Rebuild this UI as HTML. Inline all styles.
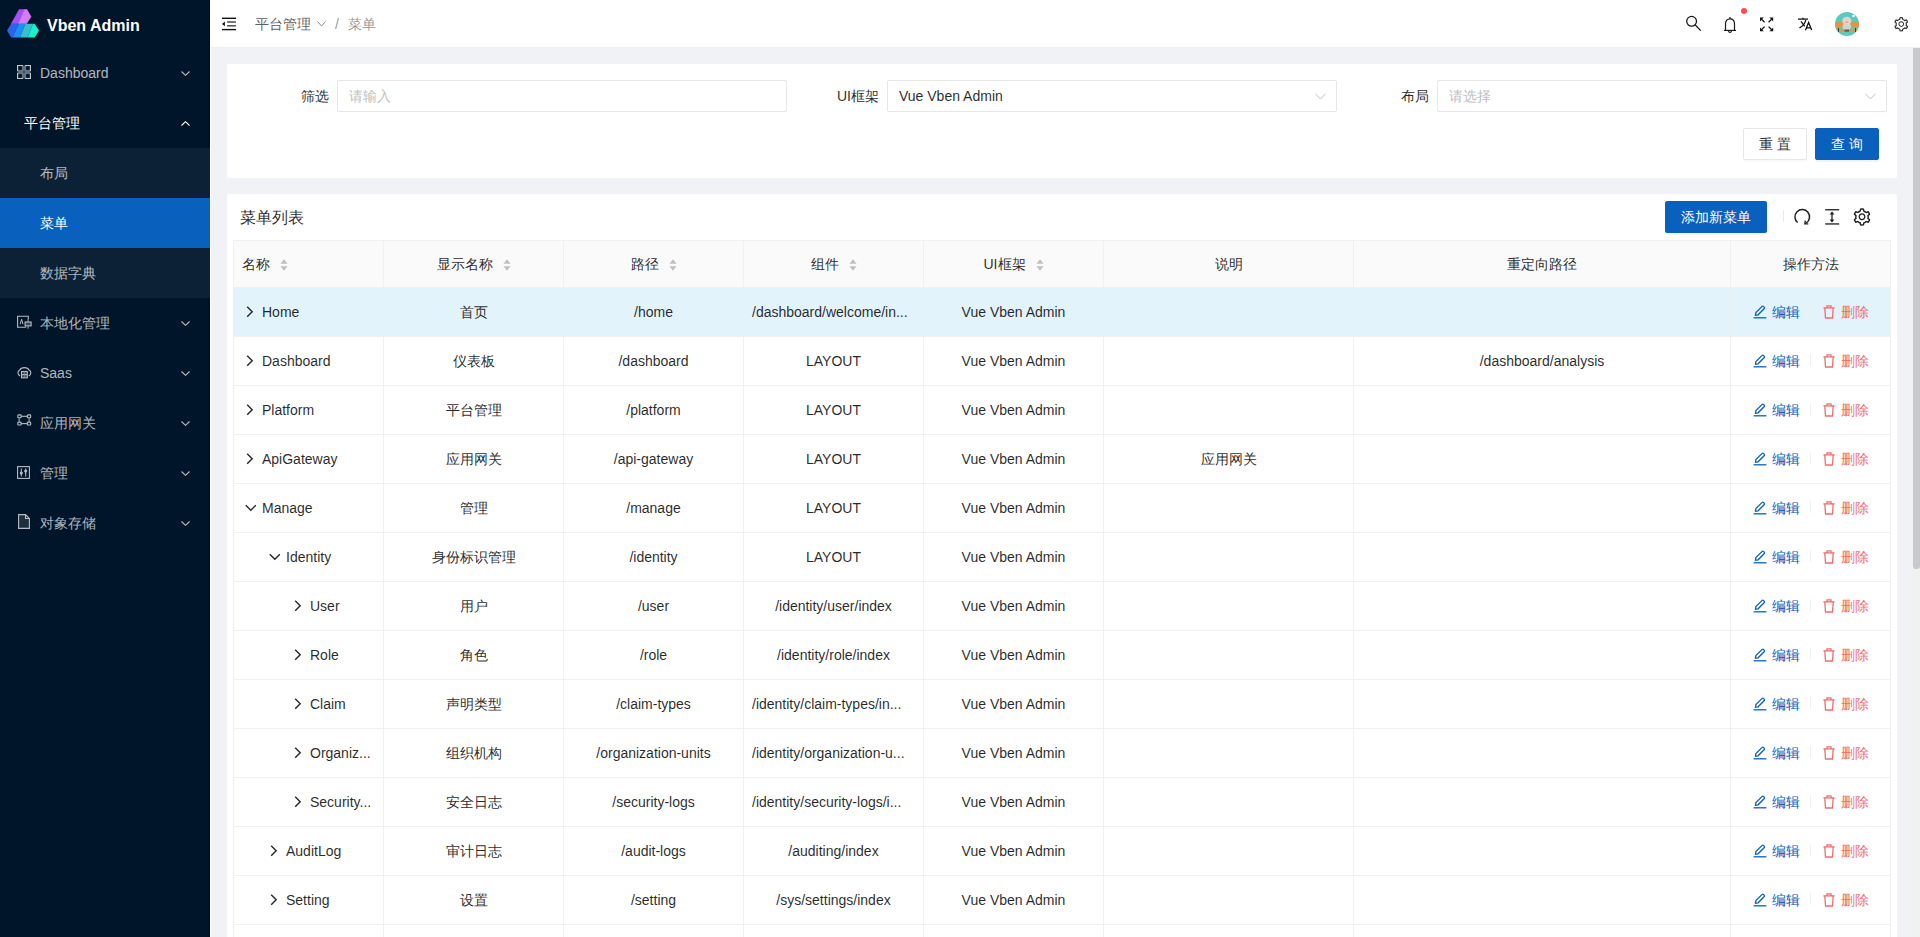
<!DOCTYPE html>
<html><head><meta charset="utf-8">
<style>
*{box-sizing:border-box;margin:0;padding:0}
html,body{width:1920px;height:937px;overflow:hidden;background:#f0f2f5;font-family:"Liberation Sans",sans-serif;font-size:14px;color:rgba(0,0,0,.85)}
.abs{position:absolute}
svg{display:block}
/* sidebar */
#side{position:absolute;left:0;top:0;width:210px;height:937px;background:linear-gradient(to right,#001529 209px,#000c17 209px)}
#side .edge{position:absolute;right:0;top:0;width:1px;height:937px;background:#000c17}
.logo-t{position:absolute;left:47px;top:14.5px;font-size:16px;font-weight:bold;color:#fff;line-height:22px;white-space:nowrap}
.mi{position:absolute;left:0;width:210px;height:50px;line-height:50px;color:rgba(255,255,255,.7);white-space:nowrap}
.mi .t{position:absolute;left:40px;top:0}
.mi .ic{position:absolute;left:17px;top:18px}
.mi .ch{position:absolute;left:181px;top:22px}
.sub{background:#0c2135}
.act{background:#0960bd;color:#fff}
/* header */
#hdr{position:absolute;left:210px;top:0;width:1710px;height:48px;background:#fff;border-bottom:1px solid #ececec;border-left:1px solid #fff}
#wline{position:absolute;left:210px;top:0;width:1px;height:937px;background:#fff}
/* scrollbar */
#sb{position:absolute;left:1913px;top:48px;width:7px;height:889px;background:#f1f1f1}
#sbt{position:absolute;left:1913px;top:48px;width:7px;height:521px;background:#c8c9cc;border-radius:0 0 3px 3px}
/* cards */
.card{position:absolute;background:#fff;border-radius:2px}
.lbl{position:absolute;width:100px;text-align:right;line-height:32px;padding-right:8px}
.inp{position:absolute;height:32px;width:450px;border:1px solid #e6e6e6;border-radius:2px;background:#fff;line-height:30px;padding-left:11px}
.ph{color:#bfbfbf}
.btn{position:absolute;height:32px;border-radius:2px;line-height:30px;text-align:center;border:1px solid #e6e6e6;background:#fff;box-shadow:0 2px 0 rgba(0,0,0,.015)}
.btn.p{background:#0960bd;border-color:#0960bd;color:#fff;box-shadow:0 2px 0 rgba(0,0,0,.045)}
</style></head><body>
<div id="side">
  <svg class="abs" style="left:7px;top:9px" width="33" height="30" viewBox="0 0 33 30">
    <polygon points="12.2,0.6 17.6,0.6 11.6,14.75 4.25,14.75" fill="#a650f7" stroke="#a650f7" stroke-width="0.6" stroke-linejoin="round"/>
    <polygon points="17.6,0.6 20,0.6 24,7.7 19.5,14.75 11.6,14.75" fill="#d77cf9" stroke="#d77cf9" stroke-width="0.6" stroke-linejoin="round"/>
    <polygon points="0,21.4 4.25,14.75 11.75,14.75 5.5,28.5 4.25,28.5" fill="#2b63ef"/>
    <polygon points="11.75,14.75 18.4,14.75 13,28.5 5.5,28.5" fill="#1e8ff9"/>
    <polygon points="18.4,14.75 26,14.75 20.5,28.5 13,28.5" fill="#35c0cb"/>
    <polygon points="26,14.75 27.5,14.75 32,21.4 27.6,28.5 20.5,28.5" fill="#14f2cc"/>
  </svg>
  <div class="logo-t">Vben Admin</div>
  <div class="mi" style="top:48px">
    <svg class="ic" style="top:17px" width="14" height="14" viewBox="0 0 14 14"><rect x="0" y="0" width="14" height="14" fill="#66717e"/><rect x="1.2" y="1.2" width="3.7" height="3.7" fill="#001529"/><rect x="9.1" y="1.2" width="3.7" height="3.7" fill="#001529"/><rect x="1.2" y="9.1" width="3.7" height="3.7" fill="#001529"/><rect x="9.1" y="9.1" width="3.7" height="3.7" fill="#001529"/><rect x="6.3" y="6.3" width="1.4" height="1.4" fill="#001529"/><rect x="6.2" y="0" width="1.6" height="1" fill="#1f2d3b"/><rect x="6.2" y="13" width="1.6" height="1" fill="#1f2d3b"/><rect x="0" y="6.2" width="1" height="1.6" fill="#1f2d3b"/><rect x="13" y="6.2" width="1" height="1.6" fill="#1f2d3b"/><path d="M0.55,6 L0.55,0.55 L6,0.55 M8,0.55 L13.45,0.55 L13.45,6 M13.45,8 L13.45,13.45 L8,13.45 M6,13.45 L0.55,13.45 L0.55,8" fill="none" stroke="#c3c7cd" stroke-width="1.1"/></svg>
    <span class="t">Dashboard</span>
    <svg class="ch" style="top:23px" width="9" height="5" viewBox="0 0 9 5" fill="none" stroke="#b9bcc1" stroke-width="1.1"><polyline points="0.5,0.5 4.5,4.3 8.5,0.5"/></svg>
  </div>
  <div class="mi" style="top:98px;color:#fff">
    <span class="t" style="left:24px">平台管理</span>
    <svg class="ch" style="top:23px" width="9" height="5" viewBox="0 0 9 5" fill="none" stroke="#fff" stroke-width="1.1"><polyline points="0.5,4.5 4.5,0.7 8.5,4.5"/></svg>
  </div>
  <div class="mi sub" style="top:148px"><span class="t">布局</span></div>
  <div class="mi act" style="top:198px;width:210px"><span class="t">菜单</span></div>
  <div class="mi sub" style="top:248px"><span class="t">数据字典</span></div>
  <div class="mi" style="top:298px">
    <svg class="ic" style="top:17px" width="15" height="14" viewBox="0 0 15 14" fill="none" stroke="#b9bcc1" stroke-width="1.1"><polyline points="9.2,12.2 0.6,12.2 0.6,1.2 11.3,1.2 11.3,4"/><path d="M3.2,9.2 L4.6,4.2 L6,9.2" stroke-width="1"/><line x1="11.1" y1="4" x2="11.1" y2="13.8" stroke="#7d8690" stroke-width="1.3"/><rect x="8.1" y="7" width="6" height="3.9" fill="#3a4654" stroke="#b9bcc1"/></svg>
    <span class="t">本地化管理</span>
    <svg class="ch" style="top:23px" width="9" height="5" viewBox="0 0 9 5" fill="none" stroke="#b9bcc1" stroke-width="1.1"><polyline points="0.5,0.5 4.5,4.3 8.5,0.5"/></svg>
  </div>
  <div class="mi" style="top:348px">
    <svg class="ic" style="top:18px" width="15" height="13" viewBox="0 0 15 13" fill="none" stroke="#b9bcc1" stroke-width="1.1"><path d="M3,10 C0.3,8.5 0.3,5 2.8,4 C4,0.8 10.8,0.8 12,4 C14.5,5 14.5,8.5 11.8,10"/><rect x="4.5" y="5.5" width="5.8" height="6.3" fill="#3a4654"/><line x1="4.5" y1="8.65" x2="10.3" y2="8.65"/><line x1="7.4" y1="5.5" x2="7.4" y2="11.8" stroke-width="0.8" stroke="#8a929b"/></svg>
    <span class="t">Saas</span>
    <svg class="ch" style="top:23px" width="9" height="5" viewBox="0 0 9 5" fill="none" stroke="#b9bcc1" stroke-width="1.1"><polyline points="0.5,0.5 4.5,4.3 8.5,0.5"/></svg>
  </div>
  <div class="mi" style="top:398px">
    <svg class="ic" style="top:16px" width="15" height="12" viewBox="0 0 15 12" fill="none" stroke="#b9bcc1" stroke-width="1.1"><rect x="0.85" y="0.85" width="3.3" height="2.9" rx="0.6"/><rect x="10.35" y="0.85" width="3.3" height="2.9" rx="0.6"/><rect x="0.85" y="8.15" width="3.3" height="2.9" rx="0.6"/><rect x="10.35" y="8.15" width="3.3" height="2.9" rx="0.6"/><line x1="4.1" y1="2.3" x2="10.4" y2="2.3"/><line x1="4.1" y1="9.6" x2="10.4" y2="9.6"/><line x1="2.2" y1="3.7" x2="2.2" y2="8.2" stroke="#8a929b" stroke-width="1.3"/><line x1="12.2" y1="3.7" x2="12.2" y2="8.2" stroke="#8a929b" stroke-width="1.3"/></svg>
    <span class="t">应用网关</span>
    <svg class="ch" style="top:23px" width="9" height="5" viewBox="0 0 9 5" fill="none" stroke="#b9bcc1" stroke-width="1.1"><polyline points="0.5,0.5 4.5,4.3 8.5,0.5"/></svg>
  </div>
  <div class="mi" style="top:448px">
    <svg class="ic" style="top:18px;left:17px" width="13" height="13" viewBox="0 0 13 13" fill="none" stroke="#b9bcc1" stroke-width="1.1"><rect x="0.6" y="0.6" width="11.8" height="11.8"/><line x1="4.3" y1="2.5" x2="4.3" y2="10.5"/><line x1="8.7" y1="2.5" x2="8.7" y2="10.5"/><circle cx="4.3" cy="7" r="1" fill="#b9bcc1"/><circle cx="8.7" cy="5" r="1" fill="#b9bcc1"/></svg>
    <span class="t">管理</span>
    <svg class="ch" style="top:23px" width="9" height="5" viewBox="0 0 9 5" fill="none" stroke="#b9bcc1" stroke-width="1.1"><polyline points="0.5,0.5 4.5,4.3 8.5,0.5"/></svg>
  </div>
  <div class="mi" style="top:498px">
    <svg class="ic" style="top:16px;left:18px" width="12" height="15" viewBox="0 0 12 15" fill="none" stroke="#b9bcc1" stroke-width="1.1"><path d="M0.6,0.6 L7.5,0.6 L11.4,4.5 L11.4,14.4 L0.6,14.4 Z" fill="#1f2f40"/><path d="M7.5,0.6 L7.5,4.5 L11.4,4.5"/></svg>
    <span class="t">对象存储</span>
    <svg class="ch" style="top:23px" width="9" height="5" viewBox="0 0 9 5" fill="none" stroke="#b9bcc1" stroke-width="1.1"><polyline points="0.5,0.5 4.5,4.3 8.5,0.5"/></svg>
  </div>
</div>
<div id="hdr">
  <svg class="abs" style="left:10px;top:17px" width="16" height="14" viewBox="0 0 16 14"><rect x="1" y="0.6" width="14" height="1.4" fill="#111"/><rect x="6.1" y="4.3" width="8.8" height="1.4" fill="#3d3d3d"/><rect x="6.1" y="8.1" width="8.8" height="1.4" fill="#3d3d3d"/><rect x="1" y="11.9" width="14" height="1.4" fill="#111"/><polygon points="1,6.9 3.9,4.5 3.9,9.2" fill="#111"/></svg>
  <span class="abs" style="left:44px;top:13px;line-height:22px;color:rgba(0,0,0,.65)">平台管理</span>
  <svg class="abs" style="left:106px;top:21px" width="9" height="6" viewBox="0 0 9 6" fill="none" stroke="#8c8c8c" stroke-width="1"><polyline points="0.5,0.5 4.5,5 8.5,0.5"/></svg>
  <span class="abs" style="left:124px;top:13px;line-height:22px;color:rgba(0,0,0,.45)">/</span>
  <span class="abs" style="left:137px;top:13px;line-height:22px;color:rgba(0,0,0,.45)">菜单</span>
  <svg class="abs" style="left:1475px;top:15px" width="17" height="17" viewBox="0 0 17 17" fill="none" stroke="#1a1a1a" stroke-width="1.3"><circle cx="5.6" cy="6.3" r="4.9"/><line x1="9.1" y1="9.8" x2="14.7" y2="15.6"/></svg>
  <svg class="abs" style="left:1513px;top:16px" width="13" height="18" viewBox="0 0 13 18" fill="none" stroke="#1a1a1a" stroke-width="1.2"><path d="M1.5,14.3 L1.5,8 C1.5,4.8 3.4,2.8 6,2.8 C8.6,2.8 10.5,4.8 10.5,8 L10.5,14.3"/><line x1="0" y1="14.4" x2="12" y2="14.4"/><path d="M4.5,15 C4.8,16.8 7.2,16.8 7.5,15"/><line x1="6" y1="1.1" x2="6" y2="2.8"/></svg>
  <div class="abs" style="left:1530px;top:8px;width:6px;height:6px;border-radius:3px;background:#ff4d4f"></div>
  <svg class="abs" style="left:1549px;top:16.5px" width="14" height="15" viewBox="0 0 14 15" fill="#111" stroke="#111" stroke-width="1.3"><polygon points="0,0.6 3.8,0.6 0,4.4" stroke="none"/><polygon points="13.2,0.6 9.4,0.6 13.2,4.4" stroke="none"/><polygon points="0,14.2 3.8,14.2 0,10.4" stroke="none"/><polygon points="13.2,14.2 9.4,14.2 13.2,10.4" stroke="none"/><line x1="1.5" y1="2.1" x2="4.6" y2="5.2"/><line x1="11.7" y1="2.1" x2="8.6" y2="5.2"/><line x1="1.5" y1="12.7" x2="4.6" y2="9.6"/><line x1="11.7" y1="12.7" x2="8.6" y2="9.6"/></svg>
  <svg class="abs" style="left:1586px;top:16px" width="16" height="16" viewBox="0 0 16 16" fill="none" stroke="#111" stroke-width="1.3"><line x1="1" y1="3.1" x2="11" y2="3.1"/><line x1="6" y1="1.8" x2="6" y2="3.1"/><line x1="4" y1="5.3" x2="7.7" y2="10.4"/><path d="M8.7,4 Q7.8,9 2.5,11.9"/><path d="M8.5,14.3 L11.6,6.4 L14.7,14.1 M9.6,11.9 L13.6,11.9"/></svg>
  <svg class="abs" style="left:1624px;top:12px" width="24" height="24" viewBox="0 0 24 24">
    <defs><clipPath id="av"><circle cx="12" cy="12" r="12"/></clipPath></defs>
    <g clip-path="url(#av)">
      <rect width="24" height="24" fill="#5ccab9"/>
      <rect x="0" y="10" width="24" height="6" fill="#d89a48"/>
      <rect x="1" y="17.8" width="22" height="1.3" fill="#d89a48"/>
      <rect x="3" y="16" width="1" height="4" fill="#3a3a3a"/><rect x="20" y="16" width="1" height="4" fill="#3a3a3a"/>
      <ellipse cx="11.8" cy="14.5" rx="4.3" ry="3.6" fill="#d2d2d2"/>
      <ellipse cx="11.8" cy="8.8" rx="4.6" ry="4" fill="#eccfc8"/>
      <ellipse cx="11.8" cy="10" rx="1.5" ry="1" fill="#e7a4a4"/>
      <rect x="9.5" y="17.5" width="4.6" height="2.2" fill="#6e5c4c"/>
      <circle cx="18.5" cy="4" r="1.3" fill="#f4f4f4"/>
    </g>
  </svg>
  <svg class="abs" style="left:1681.6px;top:16px" width="16.5" height="16.5" viewBox="0 0 1024 1024" fill="#333"><path d="M924.8 625.7l-65.5-56c3.1-19 4.7-38.4 4.7-57.8s-1.6-38.8-4.7-57.8l65.5-56a32.03 32.03 0 009.3-35.2l-.9-2.6a443.74 443.74 0 00-79.7-137.9l-1.8-2.1a32.12 32.12 0 00-35.1-9.5l-81.3 28.9c-30-24.6-63.5-44-99.7-57.6l-15.7-85a32.05 32.05 0 00-25.8-25.7l-2.7-.5c-52.1-9.4-106.9-9.4-159 0l-2.7.5a32.05 32.05 0 00-25.8 25.7l-15.8 85.4a351.86 351.86 0 00-99 57.4l-81.9-29.1a32 32 0 00-35.1 9.5l-1.8 2.1a446.02 446.02 0 00-79.7 137.9l-.9 2.6c-4.5 12.5-.8 26.5 9.3 35.2l66.3 56.6c-3.1 18.8-4.6 38-4.6 57.1 0 19.2 1.5 38.4 4.6 57.1L99 625.5a32.03 32.03 0 00-9.3 35.2l.9 2.6c18.1 50.4 44.9 96.9 79.7 137.9l1.8 2.1a32.12 32.12 0 0035.1 9.5l81.9-29.1c29.8 24.5 63.1 43.9 99 57.4l15.8 85.4a32.05 32.05 0 0025.8 25.7l2.7.5a449.4 449.4 0 00159 0l2.7-.5a32.05 32.05 0 0025.8-25.7l15.7-85a350 350 0 0099.7-57.6l81.3 28.9a32 32 0 0035.1-9.5l1.8-2.1c34.8-41.1 61.6-87.5 79.7-137.9l.9-2.6c4.5-12.3.8-26.3-9.3-35zM788.3 465.9c2.5 15.1 3.8 30.6 3.8 46.1s-1.3 31-3.8 46.1l-6.6 40.1 74.7 63.9a370.03 370.03 0 01-42.6 73.6L721 702.8l-31.4 25.8c-23.9 19.6-50.5 35-79.3 45.8l-38.1 14.3-17.9 97a377.5 377.5 0 01-85 0l-17.9-97.2-37.8-14.5c-28.5-10.8-55-26.2-78.7-45.7l-31.4-25.9-93.4 33.2c-17-22.9-31.2-47.6-42.6-73.6l75.5-64.5-6.5-40c-2.4-14.9-3.7-30.3-3.7-45.5 0-15.3 1.2-30.6 3.7-45.5l6.5-40-75.5-64.5c11.3-26.1 25.6-50.7 42.6-73.6l93.4 33.2 31.4-25.9c23.7-19.5 50.2-34.9 78.7-45.7l37.9-14.3 17.9-97.2c28.1-3.2 56.8-3.2 85 0l17.9 97 38.1 14.3c28.7 10.8 55.4 26.2 79.3 45.8l31.4 25.8 92.8-32.9c17 22.9 31.2 47.6 42.6 73.6L781.8 426l6.5 39.9zM512 326c-97.2 0-176 78.8-176 176s78.8 176 176 176 176-78.8 176-176-78.8-176-176-176zm79.2 255.2A111.6 111.6 0 01512 614c-29.9 0-58-11.7-79.2-32.8A111.6 111.6 0 01400 502c0-29.9 11.7-58 32.8-79.2C454 401.6 482.1 390 512 390c29.9 0 58 11.6 79.2 32.8A111.6 111.6 0 01624 502c0 29.9-11.7 58-32.8 79.2z"/></svg>
</div>
<div id="wline"></div>
<div id="sb"></div><div id="sbt"></div>
<div class="card" style="left:227px;top:64px;width:1670px;height:114px">
  <div class="lbl" style="left:10px;top:16px">筛选</div>
  <div class="inp" style="left:110px;top:16px"><span class="ph">请输入</span></div>
  <div class="lbl" style="left:560px;top:16px">UI框架</div>
  <div class="inp" style="left:660px;top:16px">Vue Vben Admin<svg class="abs" style="left:427px;top:12px" width="11" height="7" viewBox="0 0 11 7" fill="none" stroke="#bfbfbf" stroke-width="1"><polyline points="0.5,0.8 5.5,6 10.5,0.8"/></svg></div>
  <div class="lbl" style="left:1110px;top:16px">布局</div>
  <div class="inp" style="left:1210px;top:16px"><span class="ph">请选择</span><svg class="abs" style="left:427px;top:12px" width="11" height="7" viewBox="0 0 11 7" fill="none" stroke="#bfbfbf" stroke-width="1"><polyline points="0.5,0.8 5.5,6 10.5,0.8"/></svg></div>
  <div class="btn" style="left:1516px;top:64px;width:64px;letter-spacing:4px;text-indent:4px">重置</div>
  <div class="btn p" style="left:1588px;top:64px;width:64px;letter-spacing:4px;text-indent:4px">查询</div>
</div>
<!--T--><div class="card" style="left:227px;top:194px;width:1670px;height:760px">
<div class="abs" style="left:13px;top:12px;font-size:16px;line-height:24px;color:rgba(0,0,0,.85)">菜单列表</div>
<div class="btn p" style="left:1438px;top:7px;width:102px">添加新菜单</div>
<div class="abs" style="left:1556px;top:16px;width:1px;height:12px;background:#eaeaea"></div>
<svg class="abs" style="left:1566px;top:14px" width="18" height="18" viewBox="0 0 18 18" fill="none" stroke="#1f1f1f" stroke-width="1.5"><path d="M4.6,14.5 A7.3,7.3 0 1 1 13.2,15.0"/><polyline points="12.3,12.6 11.9,15.9 15.3,15.9" stroke-width="1.4"/></svg>
<svg class="abs" style="left:1598px;top:14px" width="15" height="18" viewBox="0 0 15 18" fill="#1f1f1f"><rect x="0.2" y="1.1" width="14" height="1.3"/><rect x="0.2" y="15.3" width="14" height="1.3"/><rect x="6.35" y="4.5" width="1.3" height="9"/><polygon points="7,3.6 4.6,6.4 9.4,6.4"/><polygon points="7,14.4 4.6,11.6 9.4,11.6"/></svg>
<svg class="abs" style="left:1625px;top:13px" width="20" height="20" viewBox="0 0 1024 1024" fill="#1f1f1f"><path d="M924.8 625.7l-65.5-56c3.1-19 4.7-38.4 4.7-57.8s-1.6-38.8-4.7-57.8l65.5-56a32.03 32.03 0 009.3-35.2l-.9-2.6a443.74 443.74 0 00-79.7-137.9l-1.8-2.1a32.12 32.12 0 00-35.1-9.5l-81.3 28.9c-30-24.6-63.5-44-99.7-57.6l-15.7-85a32.05 32.05 0 00-25.8-25.7l-2.7-.5c-52.1-9.4-106.9-9.4-159 0l-2.7.5a32.05 32.05 0 00-25.8 25.7l-15.8 85.4a351.860 351.86 0 00-99 57.4l-81.9-29.1a32 32 0 00-35.1 9.5l-1.8 2.1a446.02 446.02 0 00-79.7 137.9l-.9 2.6c-4.5 12.5-.8 26.5 9.3 35.2l66.3 56.6c-3.1 18.8-4.6 38-4.6 57.1 0 19.2 1.5 38.4 4.6 57.1L99 625.5a32.03 32.03 0 00-9.3 35.2l.9 2.6c18.1 50.4 44.9 96.9 79.7 137.9l1.8 2.1a32.12 32.12 0 0035.1 9.5l81.9-29.1c29.8 24.5 63.1 43.9 99 57.4l15.8 85.4a32.05 32.05 0 0025.8 25.7l2.7.5a449.4 449.4 0 00159 0l2.7-.5a32.05 32.05 0 0025.8-25.7l15.7-85a350 350 0 0099.7-57.6l81.3 28.9a32 32 0 0035.1-9.5l1.8-2.1c34.8-41.1 61.6-87.5 79.7-137.9l.9-2.6c4.5-12.3.8-26.3-9.3-35zM788.3 465.9c2.5 15.1 3.8 30.6 3.8 46.1s-1.3 31-3.8 46.1l-6.6 40.1 74.7 63.9a370.03 370.03 0 01-42.6 73.6L721 702.8l-31.4 25.8c-23.9 19.6-50.5 35-79.3 45.8l-38.1 14.3-17.9 97a377.5 377.5 0 01-85 0l-17.9-97.2-37.8-14.5c-28.5-10.8-55-26.2-78.7-45.7l-31.4-25.9-93.4 33.2c-17-22.9-31.200-47.6-42.6-73.6l75.5-64.5-6.5-40c-2.4-14.9-3.7-30.3-3.7-45.5 0-15.3 1.2-30.6 3.7-45.5l6.5-40-75.5-64.5c11.3-26.1 25.6-50.7 42.6-73.6l93.4 33.2 31.4-25.9c23.7-19.5 50.2-34.9 78.7-45.700l37.9-14.3 17.9-97.2c28.1-3.2 56.8-3.2 85 0l17.9 97 38.1 14.3c28.7 10.8 55.4 26.2 79.3 45.8l31.4 25.8 92.8-32.9c17 22.9 31.2 47.6 42.6 73.6L781.8 426l6.5 39.9zM512 326c-97.2 0-176 78.8-176 176s78.8 176 176 176 176-78.8 176-176-78.8-176-176-176zm79.2 255.2A111.6 111.6 0 01512 614c-29.9 0-58-11.7-79.2-32.8A111.6 111.6 0 01400 502c0-29.9 11.7-58 32.8-79.2C454 401.6 482.1 390 512 390c29.9 0 58 11.6 79.2 32.8A111.6 111.6 0 01624 502c0 29.9-11.7 58-32.8 79.2z"/></svg>
<div class="abs" style="left:6px;top:46px;width:1658px;height:48px;background:#fafafa;border-top:1px solid #f0f0f0;border-bottom:1px solid #f0f0f0"></div>
<div class="abs th" style="left:15px;top:59px;line-height:22px;white-space:nowrap">名称<svg style="display:inline-block;vertical-align:middle;margin-left:10px;position:relative;top:0px" width="8" height="12" viewBox="0 0 8 12" fill="#bfbfbf"><polygon points="4,0.3 7.6,4.8 0.4,4.8"/><polygon points="4,11.7 7.6,7.2 0.4,7.2"/></svg></div>
<div class="abs th" style="left:157px;top:59px;width:179px;text-align:center;line-height:22px;white-space:nowrap">显示名称<svg style="display:inline-block;vertical-align:middle;margin-left:10px;position:relative;top:0px" width="8" height="12" viewBox="0 0 8 12" fill="#bfbfbf"><polygon points="4,0.3 7.6,4.8 0.4,4.8"/><polygon points="4,11.7 7.6,7.2 0.4,7.2"/></svg></div>
<div class="abs th" style="left:337px;top:59px;width:179px;text-align:center;line-height:22px;white-space:nowrap">路径<svg style="display:inline-block;vertical-align:middle;margin-left:10px;position:relative;top:0px" width="8" height="12" viewBox="0 0 8 12" fill="#bfbfbf"><polygon points="4,0.3 7.6,4.8 0.4,4.8"/><polygon points="4,11.7 7.6,7.2 0.4,7.2"/></svg></div>
<div class="abs th" style="left:517px;top:59px;width:179px;text-align:center;line-height:22px;white-space:nowrap">组件<svg style="display:inline-block;vertical-align:middle;margin-left:10px;position:relative;top:0px" width="8" height="12" viewBox="0 0 8 12" fill="#bfbfbf"><polygon points="4,0.3 7.6,4.8 0.4,4.8"/><polygon points="4,11.7 7.6,7.2 0.4,7.2"/></svg></div>
<div class="abs th" style="left:697px;top:59px;width:179px;text-align:center;line-height:22px;white-space:nowrap">UI框架<svg style="display:inline-block;vertical-align:middle;margin-left:10px;position:relative;top:0px" width="8" height="12" viewBox="0 0 8 12" fill="#bfbfbf"><polygon points="4,0.3 7.6,4.8 0.4,4.8"/><polygon points="4,11.7 7.6,7.2 0.4,7.2"/></svg></div>
<div class="abs th" style="left:877px;top:59px;width:249px;text-align:center;line-height:22px;white-space:nowrap">说明</div>
<div class="abs th" style="left:1127px;top:59px;width:376px;text-align:center;line-height:22px;white-space:nowrap">重定向路径</div>
<div class="abs th" style="left:1504px;top:59px;width:159px;text-align:center;line-height:22px;white-space:nowrap">操作方法</div>
<div class="abs" style="left:6px;top:94px;width:1658px;height:49px;background:#e2f3fc;border-bottom:1px solid #f0f0f0"></div>
<svg class="abs" style="left:19px;top:112px" width="8" height="12" viewBox="0 0 8 12" fill="none" stroke="#262626" stroke-width="1.4"><polyline points="1.2,0.8 6.2,5.8 1.2,10.8"/></svg>
<div class="abs td" style="left:35px;top:107px;line-height:22px;white-space:nowrap">Home</div>
<div class="abs td" style="left:157px;top:107px;width:179px;text-align:center;line-height:22px;white-space:nowrap">首页</div>
<div class="abs td" style="left:337px;top:107px;width:179px;text-align:center;line-height:22px;white-space:nowrap">/home</div>
<div class="abs td" style="left:525px;top:107px;line-height:22px;white-space:nowrap">/dashboard/welcome/in...</div>
<div class="abs td" style="left:697px;top:107px;width:179px;text-align:center;line-height:22px;white-space:nowrap">Vue Vben Admin</div>
<svg class="abs" style="left:1526px;top:111px" width="14" height="14" viewBox="0 0 14 14" fill="none" stroke="#0960bd" stroke-width="1.3"><path d="M2.5,10.2 L2.9,7.6 L8.9,1.6 C9.4,1.1 10.1,1.1 10.6,1.6 L11.1,2.1 C11.6,2.6 11.6,3.3 11.1,3.8 L5.1,9.8 Z"/><line x1="0.6" y1="12.8" x2="13.4" y2="12.8"/></svg>
<div class="abs td" style="left:1545px;top:107px;line-height:22px;color:#0960bd">编辑</div>
<div class="abs" style="left:1583px;top:111px;width:1px;height:12px;background:#f0f0f0"></div>
<svg class="abs" style="left:1596px;top:111px" width="12" height="14" viewBox="0 0 12 14" fill="none" stroke="#ed6f6f" stroke-width="1.3"><line x1="0.4" y1="2.9" x2="11.6" y2="2.9"/><path d="M4,2.9 L4,0.9 L8,0.9 L8,2.9"/><path d="M1.8,2.9 L2.5,13 L9.5,13 L10.2,2.9"/></svg>
<div class="abs td" style="left:1614px;top:107px;line-height:22px;color:#ed6f6f">删除</div>
<div class="abs" style="left:6px;top:143px;width:1658px;height:49px;background:#fff;border-bottom:1px solid #f0f0f0"></div>
<svg class="abs" style="left:19px;top:161px" width="8" height="12" viewBox="0 0 8 12" fill="none" stroke="#262626" stroke-width="1.4"><polyline points="1.2,0.8 6.2,5.8 1.2,10.8"/></svg>
<div class="abs td" style="left:35px;top:156px;line-height:22px;white-space:nowrap">Dashboard</div>
<div class="abs td" style="left:157px;top:156px;width:179px;text-align:center;line-height:22px;white-space:nowrap">仪表板</div>
<div class="abs td" style="left:337px;top:156px;width:179px;text-align:center;line-height:22px;white-space:nowrap">/dashboard</div>
<div class="abs td" style="left:517px;top:156px;width:179px;text-align:center;line-height:22px;white-space:nowrap">LAYOUT</div>
<div class="abs td" style="left:697px;top:156px;width:179px;text-align:center;line-height:22px;white-space:nowrap">Vue Vben Admin</div>
<div class="abs td" style="left:1127px;top:156px;width:376px;text-align:center;line-height:22px;white-space:nowrap">/dashboard/analysis</div>
<svg class="abs" style="left:1526px;top:160px" width="14" height="14" viewBox="0 0 14 14" fill="none" stroke="#0960bd" stroke-width="1.3"><path d="M2.5,10.2 L2.9,7.6 L8.9,1.6 C9.4,1.1 10.1,1.1 10.6,1.6 L11.1,2.1 C11.6,2.6 11.6,3.3 11.1,3.8 L5.1,9.8 Z"/><line x1="0.6" y1="12.8" x2="13.4" y2="12.8"/></svg>
<div class="abs td" style="left:1545px;top:156px;line-height:22px;color:#0960bd">编辑</div>
<div class="abs" style="left:1583px;top:160px;width:1px;height:12px;background:#f0f0f0"></div>
<svg class="abs" style="left:1596px;top:160px" width="12" height="14" viewBox="0 0 12 14" fill="none" stroke="#ed6f6f" stroke-width="1.3"><line x1="0.4" y1="2.9" x2="11.6" y2="2.9"/><path d="M4,2.9 L4,0.9 L8,0.9 L8,2.9"/><path d="M1.8,2.9 L2.5,13 L9.5,13 L10.2,2.9"/></svg>
<div class="abs td" style="left:1614px;top:156px;line-height:22px;color:#ed6f6f">删除</div>
<div class="abs" style="left:6px;top:192px;width:1658px;height:49px;background:#fff;border-bottom:1px solid #f0f0f0"></div>
<svg class="abs" style="left:19px;top:210px" width="8" height="12" viewBox="0 0 8 12" fill="none" stroke="#262626" stroke-width="1.4"><polyline points="1.2,0.8 6.2,5.8 1.2,10.8"/></svg>
<div class="abs td" style="left:35px;top:205px;line-height:22px;white-space:nowrap">Platform</div>
<div class="abs td" style="left:157px;top:205px;width:179px;text-align:center;line-height:22px;white-space:nowrap">平台管理</div>
<div class="abs td" style="left:337px;top:205px;width:179px;text-align:center;line-height:22px;white-space:nowrap">/platform</div>
<div class="abs td" style="left:517px;top:205px;width:179px;text-align:center;line-height:22px;white-space:nowrap">LAYOUT</div>
<div class="abs td" style="left:697px;top:205px;width:179px;text-align:center;line-height:22px;white-space:nowrap">Vue Vben Admin</div>
<svg class="abs" style="left:1526px;top:209px" width="14" height="14" viewBox="0 0 14 14" fill="none" stroke="#0960bd" stroke-width="1.3"><path d="M2.5,10.2 L2.9,7.6 L8.9,1.6 C9.4,1.1 10.1,1.1 10.6,1.6 L11.1,2.1 C11.6,2.6 11.6,3.3 11.1,3.8 L5.1,9.8 Z"/><line x1="0.6" y1="12.8" x2="13.4" y2="12.8"/></svg>
<div class="abs td" style="left:1545px;top:205px;line-height:22px;color:#0960bd">编辑</div>
<div class="abs" style="left:1583px;top:209px;width:1px;height:12px;background:#f0f0f0"></div>
<svg class="abs" style="left:1596px;top:209px" width="12" height="14" viewBox="0 0 12 14" fill="none" stroke="#ed6f6f" stroke-width="1.3"><line x1="0.4" y1="2.9" x2="11.6" y2="2.9"/><path d="M4,2.9 L4,0.9 L8,0.9 L8,2.9"/><path d="M1.8,2.9 L2.5,13 L9.5,13 L10.2,2.9"/></svg>
<div class="abs td" style="left:1614px;top:205px;line-height:22px;color:#ed6f6f">删除</div>
<div class="abs" style="left:6px;top:241px;width:1658px;height:49px;background:#fff;border-bottom:1px solid #f0f0f0"></div>
<svg class="abs" style="left:19px;top:259px" width="8" height="12" viewBox="0 0 8 12" fill="none" stroke="#262626" stroke-width="1.4"><polyline points="1.2,0.8 6.2,5.8 1.2,10.8"/></svg>
<div class="abs td" style="left:35px;top:254px;line-height:22px;white-space:nowrap">ApiGateway</div>
<div class="abs td" style="left:157px;top:254px;width:179px;text-align:center;line-height:22px;white-space:nowrap">应用网关</div>
<div class="abs td" style="left:337px;top:254px;width:179px;text-align:center;line-height:22px;white-space:nowrap">/api-gateway</div>
<div class="abs td" style="left:517px;top:254px;width:179px;text-align:center;line-height:22px;white-space:nowrap">LAYOUT</div>
<div class="abs td" style="left:697px;top:254px;width:179px;text-align:center;line-height:22px;white-space:nowrap">Vue Vben Admin</div>
<div class="abs td" style="left:877px;top:254px;width:249px;text-align:center;line-height:22px;white-space:nowrap">应用网关</div>
<svg class="abs" style="left:1526px;top:258px" width="14" height="14" viewBox="0 0 14 14" fill="none" stroke="#0960bd" stroke-width="1.3"><path d="M2.5,10.2 L2.9,7.6 L8.9,1.6 C9.4,1.1 10.1,1.1 10.6,1.6 L11.1,2.1 C11.6,2.6 11.6,3.3 11.1,3.8 L5.1,9.8 Z"/><line x1="0.6" y1="12.8" x2="13.4" y2="12.8"/></svg>
<div class="abs td" style="left:1545px;top:254px;line-height:22px;color:#0960bd">编辑</div>
<div class="abs" style="left:1583px;top:258px;width:1px;height:12px;background:#f0f0f0"></div>
<svg class="abs" style="left:1596px;top:258px" width="12" height="14" viewBox="0 0 12 14" fill="none" stroke="#ed6f6f" stroke-width="1.3"><line x1="0.4" y1="2.9" x2="11.6" y2="2.9"/><path d="M4,2.9 L4,0.9 L8,0.9 L8,2.9"/><path d="M1.8,2.9 L2.5,13 L9.5,13 L10.2,2.9"/></svg>
<div class="abs td" style="left:1614px;top:254px;line-height:22px;color:#ed6f6f">删除</div>
<div class="abs" style="left:6px;top:290px;width:1658px;height:49px;background:#fff;border-bottom:1px solid #f0f0f0"></div>
<svg class="abs" style="left:18px;top:310px" width="12" height="8" viewBox="0 0 12 8" fill="none" stroke="#262626" stroke-width="1.4"><polyline points="0.8,1.2 5.8,6.2 10.8,1.2"/></svg>
<div class="abs td" style="left:35px;top:303px;line-height:22px;white-space:nowrap">Manage</div>
<div class="abs td" style="left:157px;top:303px;width:179px;text-align:center;line-height:22px;white-space:nowrap">管理</div>
<div class="abs td" style="left:337px;top:303px;width:179px;text-align:center;line-height:22px;white-space:nowrap">/manage</div>
<div class="abs td" style="left:517px;top:303px;width:179px;text-align:center;line-height:22px;white-space:nowrap">LAYOUT</div>
<div class="abs td" style="left:697px;top:303px;width:179px;text-align:center;line-height:22px;white-space:nowrap">Vue Vben Admin</div>
<svg class="abs" style="left:1526px;top:307px" width="14" height="14" viewBox="0 0 14 14" fill="none" stroke="#0960bd" stroke-width="1.3"><path d="M2.5,10.2 L2.9,7.6 L8.9,1.6 C9.4,1.1 10.1,1.1 10.6,1.6 L11.1,2.1 C11.6,2.6 11.6,3.3 11.1,3.8 L5.1,9.8 Z"/><line x1="0.6" y1="12.8" x2="13.4" y2="12.8"/></svg>
<div class="abs td" style="left:1545px;top:303px;line-height:22px;color:#0960bd">编辑</div>
<div class="abs" style="left:1583px;top:307px;width:1px;height:12px;background:#f0f0f0"></div>
<svg class="abs" style="left:1596px;top:307px" width="12" height="14" viewBox="0 0 12 14" fill="none" stroke="#ed6f6f" stroke-width="1.3"><line x1="0.4" y1="2.9" x2="11.6" y2="2.9"/><path d="M4,2.9 L4,0.9 L8,0.9 L8,2.9"/><path d="M1.8,2.9 L2.5,13 L9.5,13 L10.2,2.9"/></svg>
<div class="abs td" style="left:1614px;top:303px;line-height:22px;color:#ed6f6f">删除</div>
<div class="abs" style="left:6px;top:339px;width:1658px;height:49px;background:#fff;border-bottom:1px solid #f0f0f0"></div>
<svg class="abs" style="left:42px;top:359px" width="12" height="8" viewBox="0 0 12 8" fill="none" stroke="#262626" stroke-width="1.4"><polyline points="0.8,1.2 5.8,6.2 10.8,1.2"/></svg>
<div class="abs td" style="left:59px;top:352px;line-height:22px;white-space:nowrap">Identity</div>
<div class="abs td" style="left:157px;top:352px;width:179px;text-align:center;line-height:22px;white-space:nowrap">身份标识管理</div>
<div class="abs td" style="left:337px;top:352px;width:179px;text-align:center;line-height:22px;white-space:nowrap">/identity</div>
<div class="abs td" style="left:517px;top:352px;width:179px;text-align:center;line-height:22px;white-space:nowrap">LAYOUT</div>
<div class="abs td" style="left:697px;top:352px;width:179px;text-align:center;line-height:22px;white-space:nowrap">Vue Vben Admin</div>
<svg class="abs" style="left:1526px;top:356px" width="14" height="14" viewBox="0 0 14 14" fill="none" stroke="#0960bd" stroke-width="1.3"><path d="M2.5,10.2 L2.9,7.6 L8.9,1.6 C9.4,1.1 10.1,1.1 10.6,1.6 L11.1,2.1 C11.6,2.6 11.6,3.3 11.1,3.8 L5.1,9.8 Z"/><line x1="0.6" y1="12.8" x2="13.4" y2="12.8"/></svg>
<div class="abs td" style="left:1545px;top:352px;line-height:22px;color:#0960bd">编辑</div>
<div class="abs" style="left:1583px;top:356px;width:1px;height:12px;background:#f0f0f0"></div>
<svg class="abs" style="left:1596px;top:356px" width="12" height="14" viewBox="0 0 12 14" fill="none" stroke="#ed6f6f" stroke-width="1.3"><line x1="0.4" y1="2.9" x2="11.6" y2="2.9"/><path d="M4,2.9 L4,0.9 L8,0.9 L8,2.9"/><path d="M1.8,2.9 L2.5,13 L9.5,13 L10.2,2.9"/></svg>
<div class="abs td" style="left:1614px;top:352px;line-height:22px;color:#ed6f6f">删除</div>
<div class="abs" style="left:6px;top:388px;width:1658px;height:49px;background:#fff;border-bottom:1px solid #f0f0f0"></div>
<svg class="abs" style="left:67px;top:406px" width="8" height="12" viewBox="0 0 8 12" fill="none" stroke="#262626" stroke-width="1.4"><polyline points="1.2,0.8 6.2,5.8 1.2,10.8"/></svg>
<div class="abs td" style="left:83px;top:401px;line-height:22px;white-space:nowrap">User</div>
<div class="abs td" style="left:157px;top:401px;width:179px;text-align:center;line-height:22px;white-space:nowrap">用户</div>
<div class="abs td" style="left:337px;top:401px;width:179px;text-align:center;line-height:22px;white-space:nowrap">/user</div>
<div class="abs td" style="left:517px;top:401px;width:179px;text-align:center;line-height:22px;white-space:nowrap">/identity/user/index</div>
<div class="abs td" style="left:697px;top:401px;width:179px;text-align:center;line-height:22px;white-space:nowrap">Vue Vben Admin</div>
<svg class="abs" style="left:1526px;top:405px" width="14" height="14" viewBox="0 0 14 14" fill="none" stroke="#0960bd" stroke-width="1.3"><path d="M2.5,10.2 L2.9,7.6 L8.9,1.6 C9.4,1.1 10.1,1.1 10.6,1.6 L11.1,2.1 C11.6,2.6 11.6,3.3 11.1,3.8 L5.1,9.8 Z"/><line x1="0.6" y1="12.8" x2="13.4" y2="12.8"/></svg>
<div class="abs td" style="left:1545px;top:401px;line-height:22px;color:#0960bd">编辑</div>
<div class="abs" style="left:1583px;top:405px;width:1px;height:12px;background:#f0f0f0"></div>
<svg class="abs" style="left:1596px;top:405px" width="12" height="14" viewBox="0 0 12 14" fill="none" stroke="#ed6f6f" stroke-width="1.3"><line x1="0.4" y1="2.9" x2="11.6" y2="2.9"/><path d="M4,2.9 L4,0.9 L8,0.9 L8,2.9"/><path d="M1.8,2.9 L2.5,13 L9.5,13 L10.2,2.9"/></svg>
<div class="abs td" style="left:1614px;top:401px;line-height:22px;color:#ed6f6f">删除</div>
<div class="abs" style="left:6px;top:437px;width:1658px;height:49px;background:#fff;border-bottom:1px solid #f0f0f0"></div>
<svg class="abs" style="left:67px;top:455px" width="8" height="12" viewBox="0 0 8 12" fill="none" stroke="#262626" stroke-width="1.4"><polyline points="1.2,0.8 6.2,5.8 1.2,10.8"/></svg>
<div class="abs td" style="left:83px;top:450px;line-height:22px;white-space:nowrap">Role</div>
<div class="abs td" style="left:157px;top:450px;width:179px;text-align:center;line-height:22px;white-space:nowrap">角色</div>
<div class="abs td" style="left:337px;top:450px;width:179px;text-align:center;line-height:22px;white-space:nowrap">/role</div>
<div class="abs td" style="left:517px;top:450px;width:179px;text-align:center;line-height:22px;white-space:nowrap">/identity/role/index</div>
<div class="abs td" style="left:697px;top:450px;width:179px;text-align:center;line-height:22px;white-space:nowrap">Vue Vben Admin</div>
<svg class="abs" style="left:1526px;top:454px" width="14" height="14" viewBox="0 0 14 14" fill="none" stroke="#0960bd" stroke-width="1.3"><path d="M2.5,10.2 L2.9,7.6 L8.9,1.6 C9.4,1.1 10.1,1.1 10.6,1.6 L11.1,2.1 C11.6,2.6 11.6,3.3 11.1,3.8 L5.1,9.8 Z"/><line x1="0.6" y1="12.8" x2="13.4" y2="12.8"/></svg>
<div class="abs td" style="left:1545px;top:450px;line-height:22px;color:#0960bd">编辑</div>
<div class="abs" style="left:1583px;top:454px;width:1px;height:12px;background:#f0f0f0"></div>
<svg class="abs" style="left:1596px;top:454px" width="12" height="14" viewBox="0 0 12 14" fill="none" stroke="#ed6f6f" stroke-width="1.3"><line x1="0.4" y1="2.9" x2="11.6" y2="2.9"/><path d="M4,2.9 L4,0.9 L8,0.9 L8,2.9"/><path d="M1.8,2.9 L2.5,13 L9.5,13 L10.2,2.9"/></svg>
<div class="abs td" style="left:1614px;top:450px;line-height:22px;color:#ed6f6f">删除</div>
<div class="abs" style="left:6px;top:486px;width:1658px;height:49px;background:#fff;border-bottom:1px solid #f0f0f0"></div>
<svg class="abs" style="left:67px;top:504px" width="8" height="12" viewBox="0 0 8 12" fill="none" stroke="#262626" stroke-width="1.4"><polyline points="1.2,0.8 6.2,5.8 1.2,10.8"/></svg>
<div class="abs td" style="left:83px;top:499px;line-height:22px;white-space:nowrap">Claim</div>
<div class="abs td" style="left:157px;top:499px;width:179px;text-align:center;line-height:22px;white-space:nowrap">声明类型</div>
<div class="abs td" style="left:337px;top:499px;width:179px;text-align:center;line-height:22px;white-space:nowrap">/claim-types</div>
<div class="abs td" style="left:525px;top:499px;line-height:22px;white-space:nowrap">/identity/claim-types/in...</div>
<div class="abs td" style="left:697px;top:499px;width:179px;text-align:center;line-height:22px;white-space:nowrap">Vue Vben Admin</div>
<svg class="abs" style="left:1526px;top:503px" width="14" height="14" viewBox="0 0 14 14" fill="none" stroke="#0960bd" stroke-width="1.3"><path d="M2.5,10.2 L2.9,7.6 L8.9,1.6 C9.4,1.1 10.1,1.1 10.6,1.6 L11.1,2.1 C11.6,2.6 11.6,3.3 11.1,3.8 L5.1,9.8 Z"/><line x1="0.6" y1="12.8" x2="13.4" y2="12.8"/></svg>
<div class="abs td" style="left:1545px;top:499px;line-height:22px;color:#0960bd">编辑</div>
<div class="abs" style="left:1583px;top:503px;width:1px;height:12px;background:#f0f0f0"></div>
<svg class="abs" style="left:1596px;top:503px" width="12" height="14" viewBox="0 0 12 14" fill="none" stroke="#ed6f6f" stroke-width="1.3"><line x1="0.4" y1="2.9" x2="11.6" y2="2.9"/><path d="M4,2.9 L4,0.9 L8,0.9 L8,2.9"/><path d="M1.8,2.9 L2.5,13 L9.5,13 L10.2,2.9"/></svg>
<div class="abs td" style="left:1614px;top:499px;line-height:22px;color:#ed6f6f">删除</div>
<div class="abs" style="left:6px;top:535px;width:1658px;height:49px;background:#fff;border-bottom:1px solid #f0f0f0"></div>
<svg class="abs" style="left:67px;top:553px" width="8" height="12" viewBox="0 0 8 12" fill="none" stroke="#262626" stroke-width="1.4"><polyline points="1.2,0.8 6.2,5.8 1.2,10.8"/></svg>
<div class="abs td" style="left:83px;top:548px;line-height:22px;white-space:nowrap">Organiz...</div>
<div class="abs td" style="left:157px;top:548px;width:179px;text-align:center;line-height:22px;white-space:nowrap">组织机构</div>
<div class="abs td" style="left:337px;top:548px;width:179px;text-align:center;line-height:22px;white-space:nowrap">/organization-units</div>
<div class="abs td" style="left:525px;top:548px;line-height:22px;white-space:nowrap">/identity/organization-u...</div>
<div class="abs td" style="left:697px;top:548px;width:179px;text-align:center;line-height:22px;white-space:nowrap">Vue Vben Admin</div>
<svg class="abs" style="left:1526px;top:552px" width="14" height="14" viewBox="0 0 14 14" fill="none" stroke="#0960bd" stroke-width="1.3"><path d="M2.5,10.2 L2.9,7.6 L8.9,1.6 C9.4,1.1 10.1,1.1 10.6,1.6 L11.1,2.1 C11.6,2.6 11.6,3.3 11.1,3.8 L5.1,9.8 Z"/><line x1="0.6" y1="12.8" x2="13.4" y2="12.8"/></svg>
<div class="abs td" style="left:1545px;top:548px;line-height:22px;color:#0960bd">编辑</div>
<div class="abs" style="left:1583px;top:552px;width:1px;height:12px;background:#f0f0f0"></div>
<svg class="abs" style="left:1596px;top:552px" width="12" height="14" viewBox="0 0 12 14" fill="none" stroke="#ed6f6f" stroke-width="1.3"><line x1="0.4" y1="2.9" x2="11.6" y2="2.9"/><path d="M4,2.9 L4,0.9 L8,0.9 L8,2.9"/><path d="M1.8,2.9 L2.5,13 L9.5,13 L10.2,2.9"/></svg>
<div class="abs td" style="left:1614px;top:548px;line-height:22px;color:#ed6f6f">删除</div>
<div class="abs" style="left:6px;top:584px;width:1658px;height:49px;background:#fff;border-bottom:1px solid #f0f0f0"></div>
<svg class="abs" style="left:67px;top:602px" width="8" height="12" viewBox="0 0 8 12" fill="none" stroke="#262626" stroke-width="1.4"><polyline points="1.2,0.8 6.2,5.8 1.2,10.8"/></svg>
<div class="abs td" style="left:83px;top:597px;line-height:22px;white-space:nowrap">Security...</div>
<div class="abs td" style="left:157px;top:597px;width:179px;text-align:center;line-height:22px;white-space:nowrap">安全日志</div>
<div class="abs td" style="left:337px;top:597px;width:179px;text-align:center;line-height:22px;white-space:nowrap">/security-logs</div>
<div class="abs td" style="left:525px;top:597px;line-height:22px;white-space:nowrap">/identity/security-logs/i...</div>
<div class="abs td" style="left:697px;top:597px;width:179px;text-align:center;line-height:22px;white-space:nowrap">Vue Vben Admin</div>
<svg class="abs" style="left:1526px;top:601px" width="14" height="14" viewBox="0 0 14 14" fill="none" stroke="#0960bd" stroke-width="1.3"><path d="M2.5,10.2 L2.9,7.6 L8.9,1.6 C9.4,1.1 10.1,1.1 10.6,1.6 L11.1,2.1 C11.6,2.6 11.6,3.3 11.1,3.8 L5.1,9.8 Z"/><line x1="0.6" y1="12.8" x2="13.4" y2="12.8"/></svg>
<div class="abs td" style="left:1545px;top:597px;line-height:22px;color:#0960bd">编辑</div>
<div class="abs" style="left:1583px;top:601px;width:1px;height:12px;background:#f0f0f0"></div>
<svg class="abs" style="left:1596px;top:601px" width="12" height="14" viewBox="0 0 12 14" fill="none" stroke="#ed6f6f" stroke-width="1.3"><line x1="0.4" y1="2.9" x2="11.6" y2="2.9"/><path d="M4,2.9 L4,0.9 L8,0.9 L8,2.9"/><path d="M1.8,2.9 L2.5,13 L9.5,13 L10.2,2.9"/></svg>
<div class="abs td" style="left:1614px;top:597px;line-height:22px;color:#ed6f6f">删除</div>
<div class="abs" style="left:6px;top:633px;width:1658px;height:49px;background:#fff;border-bottom:1px solid #f0f0f0"></div>
<svg class="abs" style="left:43px;top:651px" width="8" height="12" viewBox="0 0 8 12" fill="none" stroke="#262626" stroke-width="1.4"><polyline points="1.2,0.8 6.2,5.8 1.2,10.8"/></svg>
<div class="abs td" style="left:59px;top:646px;line-height:22px;white-space:nowrap">AuditLog</div>
<div class="abs td" style="left:157px;top:646px;width:179px;text-align:center;line-height:22px;white-space:nowrap">审计日志</div>
<div class="abs td" style="left:337px;top:646px;width:179px;text-align:center;line-height:22px;white-space:nowrap">/audit-logs</div>
<div class="abs td" style="left:517px;top:646px;width:179px;text-align:center;line-height:22px;white-space:nowrap">/auditing/index</div>
<div class="abs td" style="left:697px;top:646px;width:179px;text-align:center;line-height:22px;white-space:nowrap">Vue Vben Admin</div>
<svg class="abs" style="left:1526px;top:650px" width="14" height="14" viewBox="0 0 14 14" fill="none" stroke="#0960bd" stroke-width="1.3"><path d="M2.5,10.2 L2.9,7.6 L8.9,1.6 C9.4,1.1 10.1,1.1 10.6,1.6 L11.1,2.1 C11.6,2.6 11.6,3.3 11.1,3.8 L5.1,9.8 Z"/><line x1="0.6" y1="12.8" x2="13.4" y2="12.8"/></svg>
<div class="abs td" style="left:1545px;top:646px;line-height:22px;color:#0960bd">编辑</div>
<div class="abs" style="left:1583px;top:650px;width:1px;height:12px;background:#f0f0f0"></div>
<svg class="abs" style="left:1596px;top:650px" width="12" height="14" viewBox="0 0 12 14" fill="none" stroke="#ed6f6f" stroke-width="1.3"><line x1="0.4" y1="2.9" x2="11.6" y2="2.9"/><path d="M4,2.9 L4,0.9 L8,0.9 L8,2.9"/><path d="M1.8,2.9 L2.5,13 L9.5,13 L10.2,2.9"/></svg>
<div class="abs td" style="left:1614px;top:646px;line-height:22px;color:#ed6f6f">删除</div>
<div class="abs" style="left:6px;top:682px;width:1658px;height:49px;background:#fff;border-bottom:1px solid #f0f0f0"></div>
<svg class="abs" style="left:43px;top:700px" width="8" height="12" viewBox="0 0 8 12" fill="none" stroke="#262626" stroke-width="1.4"><polyline points="1.2,0.8 6.2,5.8 1.2,10.8"/></svg>
<div class="abs td" style="left:59px;top:695px;line-height:22px;white-space:nowrap">Setting</div>
<div class="abs td" style="left:157px;top:695px;width:179px;text-align:center;line-height:22px;white-space:nowrap">设置</div>
<div class="abs td" style="left:337px;top:695px;width:179px;text-align:center;line-height:22px;white-space:nowrap">/setting</div>
<div class="abs td" style="left:517px;top:695px;width:179px;text-align:center;line-height:22px;white-space:nowrap">/sys/settings/index</div>
<div class="abs td" style="left:697px;top:695px;width:179px;text-align:center;line-height:22px;white-space:nowrap">Vue Vben Admin</div>
<svg class="abs" style="left:1526px;top:699px" width="14" height="14" viewBox="0 0 14 14" fill="none" stroke="#0960bd" stroke-width="1.3"><path d="M2.5,10.2 L2.9,7.6 L8.9,1.6 C9.4,1.1 10.1,1.1 10.6,1.6 L11.1,2.1 C11.6,2.6 11.6,3.3 11.1,3.8 L5.1,9.8 Z"/><line x1="0.6" y1="12.8" x2="13.4" y2="12.8"/></svg>
<div class="abs td" style="left:1545px;top:695px;line-height:22px;color:#0960bd">编辑</div>
<div class="abs" style="left:1583px;top:699px;width:1px;height:12px;background:#f0f0f0"></div>
<svg class="abs" style="left:1596px;top:699px" width="12" height="14" viewBox="0 0 12 14" fill="none" stroke="#ed6f6f" stroke-width="1.3"><line x1="0.4" y1="2.9" x2="11.6" y2="2.9"/><path d="M4,2.9 L4,0.9 L8,0.9 L8,2.9"/><path d="M1.8,2.9 L2.5,13 L9.5,13 L10.2,2.9"/></svg>
<div class="abs td" style="left:1614px;top:695px;line-height:22px;color:#ed6f6f">删除</div>
<div class="abs" style="left:6px;top:731px;width:1658px;height:49px;background:#fff;border-bottom:1px solid #f0f0f0"></div>
<div class="abs" style="left:6px;top:46px;width:1px;height:714px;background:#f0f0f0"></div>
<div class="abs" style="left:156px;top:46px;width:1px;height:714px;background:#f0f0f0"></div>
<div class="abs" style="left:336px;top:46px;width:1px;height:714px;background:#f0f0f0"></div>
<div class="abs" style="left:516px;top:46px;width:1px;height:714px;background:#f0f0f0"></div>
<div class="abs" style="left:696px;top:46px;width:1px;height:714px;background:#f0f0f0"></div>
<div class="abs" style="left:876px;top:46px;width:1px;height:714px;background:#f0f0f0"></div>
<div class="abs" style="left:1126px;top:46px;width:1px;height:714px;background:#f0f0f0"></div>
<div class="abs" style="left:1503px;top:46px;width:1px;height:714px;background:#f0f0f0"></div>
<div class="abs" style="left:1663px;top:46px;width:1px;height:714px;background:#f0f0f0"></div>
</div><!--/T-->
</body></html>
